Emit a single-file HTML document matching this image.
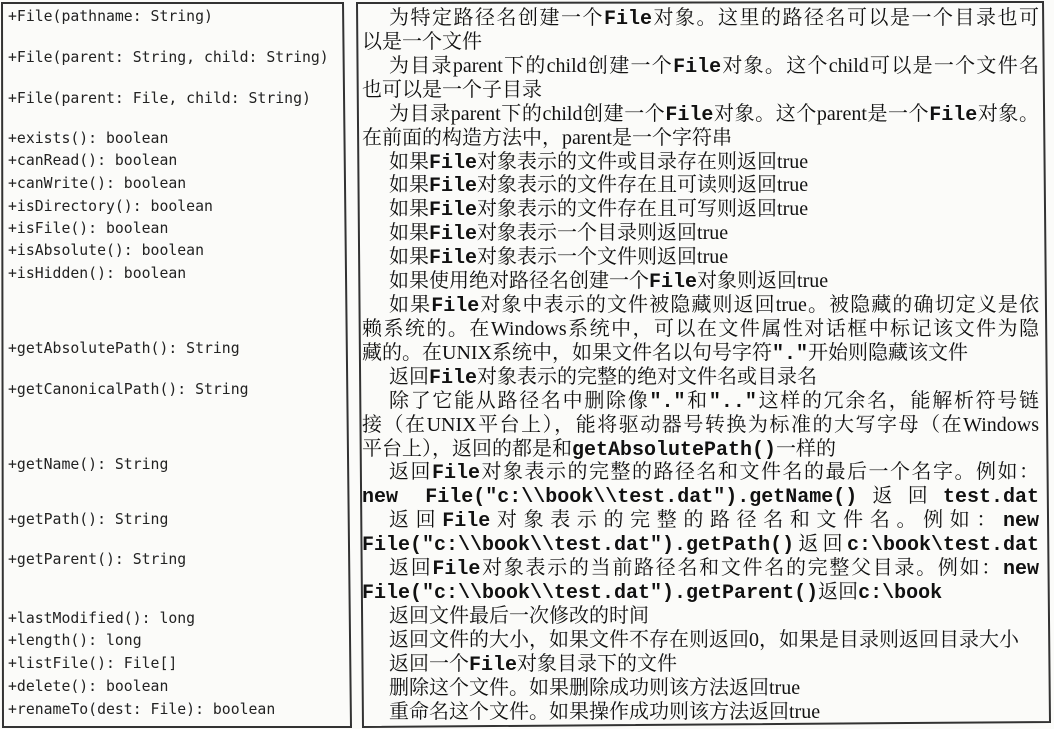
<!DOCTYPE html>
<html><head><meta charset="utf-8"><style>
body{margin:0;width:1054px;height:729px;background:#fbfbf9;position:relative;overflow:hidden}
.l{position:absolute;left:8px;font-family:"DejaVu Sans Mono","Liberation Mono",monospace;font-size:14.8px;color:#222;white-space:nowrap;line-height:18px}
.r{position:absolute;left:362px;width:677px;font-family:"Liberation Serif","Noto Serif CJK SC",serif;font-size:20px;color:#111;white-space:nowrap;line-height:22px}
.r.i{left:389px;width:650px}
.j{text-align:justify;text-align-last:justify}
code{font-family:"Liberation Mono","Noto Serif CJK SC",monospace;font-weight:bold;font-size:20px}
</style></head><body>
<svg width="1054" height="729" style="position:absolute;left:0;top:0">
<polygon points="2,3 343,3 351,727 3,727" fill="none" stroke="#333" stroke-width="2"/>
<polygon points="357,3 1043,2 1050,722 363,727" fill="none" stroke="#333" stroke-width="2"/>
</svg>

<div class="l" style="top:8px">+File(pathname: String)</div>
<div class="l" style="top:49px">+File(parent: String, child: String)</div>
<div class="l" style="top:90px">+File(parent: File, child: String)</div>
<div class="l" style="top:130px">+exists(): boolean</div>
<div class="l" style="top:152px">+canRead(): boolean</div>
<div class="l" style="top:175px">+canWrite(): boolean</div>
<div class="l" style="top:198px">+isDirectory(): boolean</div>
<div class="l" style="top:220px">+isFile(): boolean</div>
<div class="l" style="top:242px">+isAbsolute(): boolean</div>
<div class="l" style="top:265px">+isHidden(): boolean</div>
<div class="l" style="top:340px">+getAbsolutePath(): String</div>
<div class="l" style="top:381px">+getCanonicalPath(): String</div>
<div class="l" style="top:456px">+getName(): String</div>
<div class="l" style="top:511px">+getPath(): String</div>
<div class="l" style="top:551px">+getParent(): String</div>
<div class="l" style="top:610px">+lastModified(): long</div>
<div class="l" style="top:632px">+length(): long</div>
<div class="l" style="top:655px">+listFile(): File[]</div>
<div class="l" style="top:678px">+delete(): boolean</div>
<div class="l" style="top:701px">+renameTo(dest: File): boolean</div>

<div class="r i j" style="top:7px">为特定路径名创建一个<code>File</code>对象。这里的路径名可以是一个目录也可</div>
<div class="r" style="top:31px">以是一个文件</div>
<div class="r i j" style="top:55px">为目录parent下的child创建一个<code>File</code>对象。这个child可以是一个文件名</div>
<div class="r" style="top:79px">也可以是一个子目录</div>
<div class="r i j" style="top:103px">为目录parent下的child创建一个<code>File</code>对象。这个parent是一个<code>File</code>对象。</div>
<div class="r" style="top:127px">在前面的构造方法中，parent是一个字符串</div>
<div class="r i" style="top:151px">如果<code>File</code>对象表示的文件或目录存在则返回true</div>
<div class="r i" style="top:174px">如果<code>File</code>对象表示的文件存在且可读则返回true</div>
<div class="r i" style="top:198px">如果<code>File</code>对象表示的文件存在且可写则返回true</div>
<div class="r i" style="top:222px">如果<code>File</code>对象表示一个目录则返回true</div>
<div class="r i" style="top:246px">如果<code>File</code>对象表示一个文件则返回true</div>
<div class="r i" style="top:270px">如果使用绝对路径名创建一个<code>File</code>对象则返回true</div>
<div class="r i j" style="top:294px">如果<code>File</code>对象中表示的文件被隐藏则返回true。被隐藏的确切定义是依</div>
<div class="r j" style="top:318px">赖系统的。在Windows系统中，可以在文件属性对话框中标记该文件为隐</div>
<div class="r" style="top:342px">藏的。在UNIX系统中，如果文件名以句号字符<code>"."</code>开始则隐藏该文件</div>
<div class="r i" style="top:366px">返回<code>File</code>对象表示的完整的绝对文件名或目录名</div>
<div class="r i j" style="top:390px">除了它能从路径名中删除像<code>"."</code>和<code>".."</code>这样的冗余名，能解析符号链</div>
<div class="r j" style="top:414px">接（在UNIX平台上），能将驱动器号转换为标准的大写字母（在Windows</div>
<div class="r" style="top:438px">平台上），返回的都是和<code>getAbsolutePath()</code>一样的</div>
<div class="r i j" style="top:461px">返回<code>File</code>对象表示的完整的路径名和文件名的最后一个名字。例如：</div>
<div class="r j" style="top:485px"><code>new File("c:\\book\\test.dat").getName()</code>返回<code>test.dat</code></div>
<div class="r i j" style="top:509px">返回<code>File</code>对象表示的完整的路径名和文件名。例如：<code>new</code></div>
<div class="r j" style="top:533px"><code>File("c:\\book\\test.dat").getPath()</code>返回<code>c:\book\test.dat</code></div>
<div class="r i j" style="top:557px">返回<code>File</code>对象表示的当前路径名和文件名的完整父目录。例如：<code>new</code></div>
<div class="r" style="top:581px"><code>File("c:\\book\\test.dat").getParent()</code>返回<code>c:\book</code></div>
<div class="r i" style="top:605px">返回文件最后一次修改的时间</div>
<div class="r i" style="top:629px">返回文件的大小，如果文件不存在则返回0，如果是目录则返回目录大小</div>
<div class="r i" style="top:653px">返回一个<code>File</code>对象目录下的文件</div>
<div class="r i" style="top:677px">删除这个文件。如果删除成功则该方法返回true</div>
<div class="r i" style="top:701px">重命名这个文件。如果操作成功则该方法返回true</div>
</body></html>
